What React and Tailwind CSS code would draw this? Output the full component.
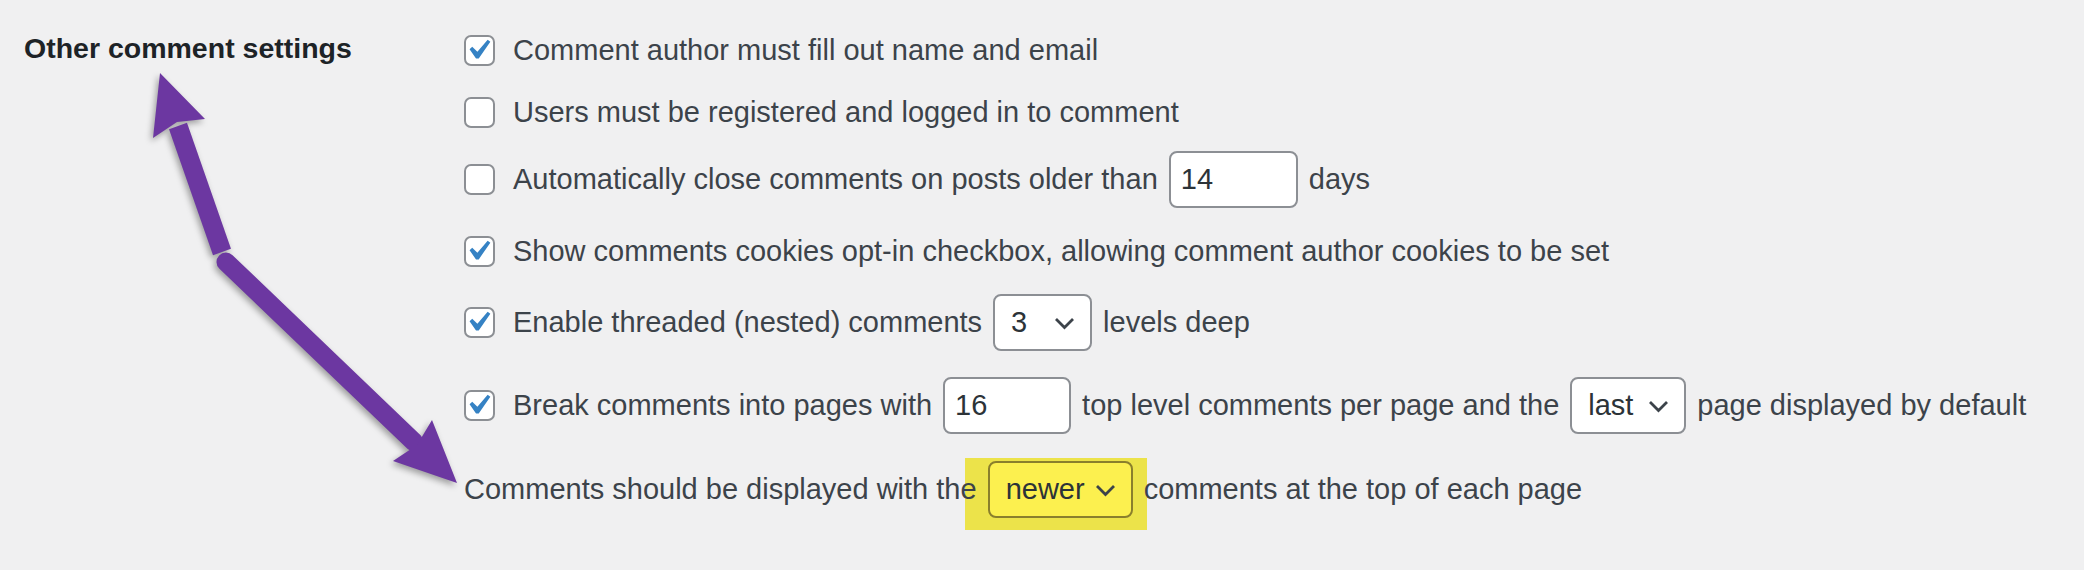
import React from 'react'

function Checkbox({ checked }) {
  return (
    <span className="relative h-[31px] w-[31px] shrink-0 rounded-[7px] border-2 border-[#8c8f94] bg-white">
      {checked && (
        <svg className="absolute left-[-8px] top-[-7px] h-[40px] w-[40px]" viewBox="0 0 20 20">
          <path d="M14.83 4.89l1.34.94-5.81 8.38H9.02L5.78 9.67l1.34-1.25 2.57 2.4z" fill="#3582c4" />
        </svg>
      )}
    </span>
  )
}

function NumberBox({ value, className = 'w-[129px]' }) {
  return (
    <span className={`flex h-[57px] shrink-0 items-center rounded-[8px] border-2 border-[#8c8f94] bg-white px-[10px] text-[#2c3338] ${className}`}>
      {value}
    </span>
  )
}

function Chevron() {
  return (
    <svg className="mt-[2px] h-[13px] w-[21px]" viewBox="0 0 21 13">
      <polyline points="2,2 10.5,10.5 19,2" fill="none" stroke="#3c434a" strokeWidth="2.8" />
    </svg>
  )
}

function SelectBox({ value, className, tone = 'border-[#8c8f94] bg-white' }) {
  return (
    <span className={`flex h-[57px] shrink-0 items-center justify-between rounded-[8px] border-2 pl-[16px] pr-[15px] text-[#2c3338] ${tone} ${className}`}>
      <span>{value}</span>
      <Chevron />
    </span>
  )
}

function Row({ h, children }) {
  return <div className={`flex items-center gap-[11px] whitespace-nowrap ${h}`}>{children}</div>
}

function CheckRow({ h, checked, children }) {
  return (
    <div className={`flex items-center whitespace-nowrap ${h}`}>
      <Checkbox checked={checked} />
      <div className="ml-[18px] flex items-center gap-[11px]">{children}</div>
    </div>
  )
}

function Arrow() {
  return (
    <svg
      className="pointer-events-none absolute inset-0 h-[570px] w-[2084px] drop-shadow-[-2px_3px_3px_rgba(0,0,0,0.35)]"
      viewBox="0 0 2084 570"
    >
      <polyline points="178,126 222,252" fill="none" stroke="#6c37a1" strokeWidth="19" />
      <polyline points="226,262 414,442" fill="none" stroke="#6c37a1" strokeWidth="19" strokeLinecap="round" />
      <polygon points="160,73 205,119 177,122 153,138" fill="#6c37a1" />
      <polygon points="457,483 393,461 417,445 432,420" fill="#6c37a1" />
    </svg>
  )
}

export default function App() {
  return (
    <div className="relative isolate flex h-[570px] w-[2084px] overflow-hidden bg-[#f0f0f1] font-['Liberation_Sans',Arial,sans-serif] text-[29px] leading-none text-[#3c434a]">
      <div className="w-[464px] shrink-0 pl-[24px] pt-[34px]">
        <h2 className="text-[28.5px] font-bold leading-none text-[#1d2327]">Other comment settings</h2>
      </div>

      <div className="flex flex-col pt-[19px]">
        <CheckRow h="h-[62px]" checked>
          <span>Comment author must fill out name and email</span>
        </CheckRow>
        <CheckRow h="h-[62px]">
          <span>Users must be registered and logged in to comment</span>
        </CheckRow>
        <CheckRow h="h-[72px]">
          <span>Automatically close comments on posts older than</span>
          <NumberBox value="14" />
          <span>days</span>
        </CheckRow>
        <CheckRow h="h-[72px]" checked>
          <span>Show comments cookies opt-in checkbox, allowing comment author cookies to be set</span>
        </CheckRow>
        <CheckRow h="h-[70px]" checked>
          <span>Enable threaded (nested) comments</span>
          <SelectBox value="3" className="w-[99px]" />
          <span>levels deep</span>
        </CheckRow>
        <CheckRow h="h-[96px]" checked>
          <span>Break comments into pages with</span>
          <NumberBox value="16" className="w-[128px]" />
          <span>top level comments per page and the</span>
          <SelectBox value="last" className="w-[116px]" />
          <span>page displayed by default</span>
        </CheckRow>
        <Row h="h-[72px]">
          <span>Comments should be displayed with the</span>
          <span className="relative">
            <span className="absolute bottom-[-12px] left-[-23px] right-[-14px] top-[-3px] -z-10 bg-[#ece34a]" />
            <SelectBox value="newer" className="w-[145px]" tone="border-[#8a7f2c] bg-[#fcf04f]" />
          </span>
          <span>comments at the top of each page</span>
        </Row>
      </div>

      <Arrow />
    </div>
  )
}
